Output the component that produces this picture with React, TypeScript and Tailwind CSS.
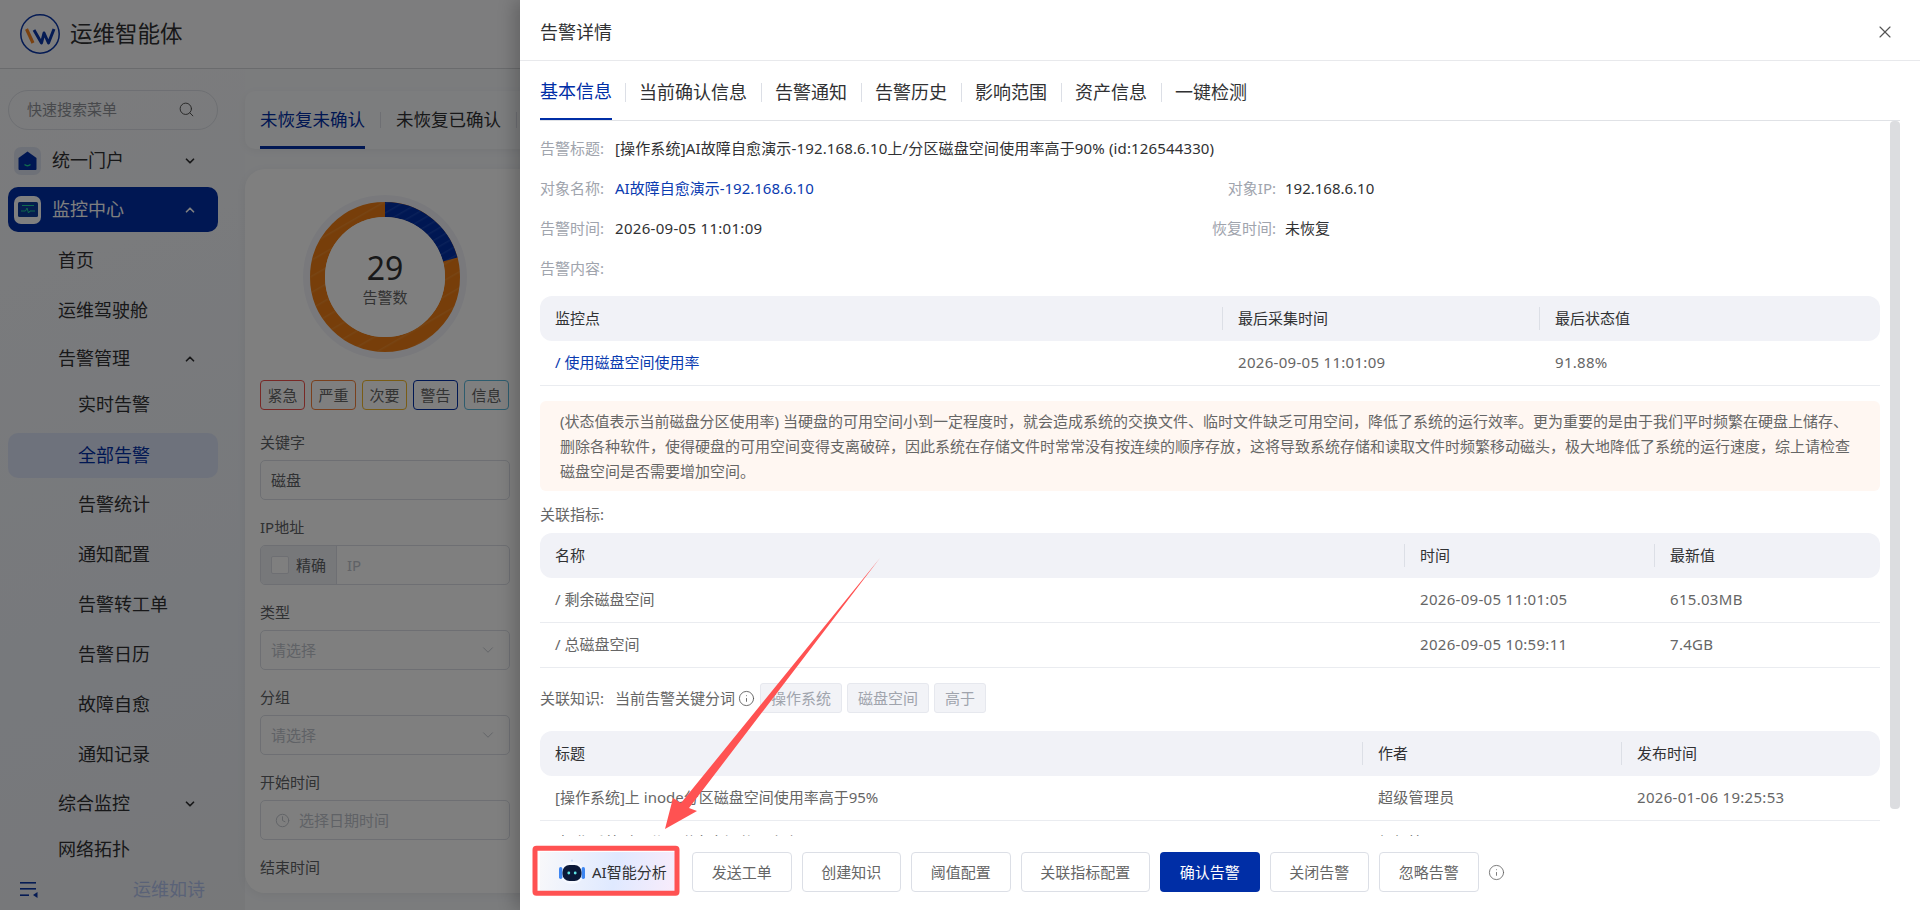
import { ChevronDown, ChevronUp, Clock, Info, Search, X } from "lucide-react";
import type { ReactNode } from "react";

type Row = string[];

const subMenu = ["实时告警", "全部告警", "告警统计", "通知配置", "告警转工单", "告警日历", "故障自愈", "通知记录"];
const panelTabs = ["当前确认信息", "告警通知", "告警历史", "影响范围", "资产信息", "一键检测"];
const footerButtons = ["发送工单", "创建知识", "阈值配置", "关联指标配置"];
const levelTags = [
  { label: "紧急", cls: "border-[#f0524d]" },
  { label: "严重", cls: "border-[#f5803a]" },
  { label: "次要", cls: "border-[#f2b92b]" },
  { label: "警告", cls: "border-[#002ea6]" },
  { label: "信息", cls: "border-[#5bb8dc]" },
];

function Logo() {
  return (
    <svg width="40" height="40" viewBox="0 0 40 40" fill="none">
      <circle cx="20" cy="20" r="19.2" stroke="#0a36a8" strokeWidth="1.5" />
      <path d="M6.5 15 L13 29" stroke="#f58220" strokeWidth="3.2" />
      <path d="M14 16 L21.5 29 L24 19 L28.5 29 L34 15" stroke="#0a36a8" strokeWidth="3" strokeLinejoin="round" />
    </svg>
  );
}

function PortalIcon() {
  return (
    <div className="grid h-[28px] w-[27px] place-items-center rounded-[7px] bg-[#dde2f0]">
      <svg width="19" height="19" viewBox="0 0 19 19">
        <path d="M9.5 0.5 L18.5 7 V18 Q18.5 19 17.5 19 H1.5 Q0.5 19 0.5 18 V7 Z" fill="#002ea6" />
        <path d="M6.5 13.5 Q9.5 16 12.5 13.5" stroke="#1fd49a" strokeWidth="1.5" fill="none" />
      </svg>
    </div>
  );
}

function MonitorIcon() {
  return (
    <div className="grid h-[28px] w-[27px] place-items-center rounded-[7px] bg-white">
      <svg width="20" height="15" viewBox="0 0 20 15">
        <rect width="20" height="15" rx="1.5" fill="#0a3a9c" />
        <path d="M4 3.5 H16" stroke="#1fd49a" strokeWidth="1" />
        <path d="M3 9 H7.5 L9 6 L10.5 11 L12 9 H17" stroke="#1fd49a" strokeWidth="1" fill="none" />
      </svg>
    </div>
  );
}

function CollapseIcon() {
  return (
    <svg width="18" height="16" viewBox="0 0 18 16" fill="#0a36a8">
      <rect x="0" y="0" width="16" height="1.6" />
      <rect x="0" y="6" width="16" height="1.6" />
      <rect x="0" y="12.4" width="9" height="1.6" />
      <path d="M17.5 10 V16 L13 13 Z" />
    </svg>
  );
}

function RobotIcon() {
  return (
    <svg width="26" height="28" viewBox="0 0 26 28">
      <circle cx="13" cy="2.5" r="0.9" fill="#c9d8f5" />
      <path d="M13 3 V7" stroke="#d9e4f7" strokeWidth="1" />
      <ellipse cx="13" cy="15" rx="12" ry="11" fill="#f5f8ff" />
      <rect x="0" y="9" width="3.4" height="12" rx="1.7" fill="#3d86f2" />
      <rect x="22.6" y="9" width="3.4" height="12" rx="1.7" fill="#3d86f2" />
      <rect x="3.5" y="7" width="19" height="16" rx="7" fill="#0b1838" />
      <circle cx="9.8" cy="15" r="1.4" fill="#5fe6e6" />
      <circle cx="16.2" cy="15" r="1.4" fill="#5fe6e6" />
    </svg>
  );
}

function Sidebar() {
  return (
    <aside className="flex w-[245px] shrink-0 flex-col bg-[linear-gradient(160deg,#f7f8fa,#eef2f9_70%,#eef0f3)]">
      <div className="mt-[21px] ml-[8px] flex h-[40px] w-[210px] items-center justify-between rounded-full border border-[#dcdfe6] pr-[22px] pb-[2px] pl-[18px] text-[15px] text-[#909399]">
        <span>快速搜索菜单</span>
        <Search size={17} strokeWidth={1.4} className="text-[#555]" />
      </div>

      <div className="mt-[8px] ml-[8px] flex h-[45px] w-[210px] items-center gap-[11px] pr-[21px] pl-[6px] text-[18px] text-[#303133]">
        <PortalIcon />
        <span className="flex-1">统一门户</span>
        <ChevronDown size={14} strokeWidth={3} />
      </div>
      <div className="mt-[4px] ml-[8px] flex h-[45px] w-[210px] items-center gap-[11px] rounded-[10px] bg-[#002ea6] pr-[21px] pl-[6px] text-[18px] text-white">
        <MonitorIcon />
        <span className="flex-1">监控中心</span>
        <ChevronUp size={14} strokeWidth={3} />
      </div>

      <div className="mt-[4px] flex h-[50px] items-center pb-[2px] pl-[58px] text-[18px] text-[#303133]">首页</div>
      <div className="flex h-[50px] items-center pb-[2px] pl-[58px] text-[18px] text-[#303133]">运维驾驶舱</div>
      <div className="flex h-[44px] items-center justify-between pt-[1px] pr-[48px] pl-[58px] text-[18px] text-[#303133]">
        告警管理
        <ChevronUp size={14} strokeWidth={3} />
      </div>
      {subMenu.map((item) =>
        item === "全部告警" ? (
          <div key={item} className="flex h-[50px] items-center">
            <div className="ml-[8px] flex h-[45px] w-[210px] items-center rounded-[10px] bg-[#dde5f8] pl-[70px] text-[18px] text-[#002ea6]">{item}</div>
          </div>
        ) : (
          <div key={item} className="flex h-[50px] items-center pb-[1px] pl-[78px] text-[18px] text-[#303133]">
            {item}
          </div>
        ),
      )}
      <div className="flex h-[50px] items-center justify-between pr-[48px] pb-[3px] pl-[58px] text-[18px] text-[#303133]">
        综合监控
        <ChevronDown size={14} strokeWidth={3} />
      </div>
      <div className="flex h-[40px] items-center pb-[2px] pl-[58px] text-[18px] text-[#303133]">网络拓扑</div>
      <div className="flex h-[40px] items-center justify-between pr-[40px] pb-[1px] pl-[20px]">
        <CollapseIcon />
        <span className="text-[18px] text-[#b4c4ee]">运维如诗</span>
      </div>
    </aside>
  );
}

function Field({ label, first, children }: { label: string; first?: boolean; children: ReactNode }) {
  return (
    <div className={first ? "mt-[23px]" : "mt-[18px]"}>
      <div className="h-[20px] text-[15px] leading-[18px] text-[#606266]">{label}</div>
      {children}
    </div>
  );
}

function SelectBox() {
  return (
    <div className="mt-[7px] flex h-[40px] items-center justify-between rounded-[5px] border border-[#dcdfe6] pr-[12px] pl-[10px] text-[15px] text-[#c0c4cc]">
      请选择
      <ChevronDown size={18} strokeWidth={1.2} />
    </div>
  );
}

function Main() {
  return (
    <main className="min-w-0 flex-1">
      <div className="mt-[22px] flex h-[58px] items-end rounded-[10px] bg-[#f9fafc] pl-[15px] text-[17.5px] shadow-[0_2px_8px_rgba(0,0,0,0.05)]">
        <div className="flex h-[59px] w-[105px] items-center justify-center border-b-[3px] border-[#002ea6] pt-[2px] whitespace-nowrap text-[#002ea6]">未恢复未确认</div>
        <div className="mx-[15px] mb-[21px] h-[16px] w-px bg-[#dcdfe6]" />
        <div className="flex h-[59px] w-[105px] items-center justify-center pt-[2px] pb-[3px] whitespace-nowrap text-[#303133]">未恢复已确认</div>
        <div className="mx-[15px] mb-[21px] h-[16px] w-px bg-[#dcdfe6]" />
      </div>
      <div className="mt-[20px] h-[724px] rounded-[20px] bg-white pt-[23px] pl-[15px] shadow-[0_2px_10px_rgba(0,0,0,0.06)]">
        <div className="w-[250px]">
          <div className="relative h-[170px] w-[250px]">
            <svg width="250" height="170" viewBox="0 0 250 170">
              <defs>
                <pattern id="hatch" width="14" height="14" patternUnits="userSpaceOnUse" patternTransform="rotate(-30)">
                  <rect width="14" height="14" fill="#ee7d14" />
                  <rect width="14" height="1.5" fill="#f08a2a" />
                </pattern>
                <pattern id="hatchBlue" width="8" height="8" patternUnits="userSpaceOnUse" patternTransform="rotate(-30)">
                  <rect width="8" height="8" fill="#002ea6" />
                  <rect width="8" height="1.5" fill="#1442b4" />
                </pattern>
              </defs>
              <circle cx="125" cy="85" r="82" fill="#f2f3f9" />
              <circle cx="125" cy="85" r="67.5" fill="none" stroke="url(#hatch)" strokeWidth="15" />
              <path d="M125 17.5 A67.5 67.5 0 0 1 190.2 67.5" fill="none" stroke="url(#hatchBlue)" strokeWidth="15" />
              <circle cx="125" cy="85" r="60" fill="white" />
            </svg>
            <div className="absolute inset-x-0 top-[54px] text-center text-[32px] leading-[44px] text-[#303133]">29</div>
            <div className="absolute inset-x-0 top-[94px] text-center text-[15px] leading-[22px] text-[#666]">告警数</div>
          </div>
          <div className="mt-[18px] flex gap-[6px]">
            {levelTags.map((tag) => (
              <div key={tag.label} className={`flex h-[30px] w-[45px] items-center justify-center rounded-[4px] border text-[15px] text-[#666] ${tag.cls}`}>
                {tag.label}
              </div>
            ))}
          </div>
          <Field label="关键字" first>
            <div className="mt-[7px] flex h-[40px] items-center rounded-[5px] border border-[#dcdfe6] pl-[10px] text-[15px] text-[#606266]">磁盘</div>
          </Field>
          <Field label="IP地址">
            <div className="mt-[7px] flex h-[40px] items-stretch overflow-hidden rounded-[5px] border border-[#dcdfe6] text-[15px]">
              <div className="flex w-[76px] items-center gap-[7px] border-r border-[#dcdfe6] bg-[#eef0f5] pl-[10px] text-[#606266]">
                <span className="h-[18px] w-[18px] rounded-[2px] border border-[#dcdfe6] bg-white" />
                精确
              </div>
              <div className="flex items-center pl-[10px] text-[#c0c4cc]">IP</div>
            </div>
          </Field>
          <Field label="类型">
            <SelectBox />
          </Field>
          <Field label="分组">
            <SelectBox />
          </Field>
          <Field label="开始时间">
            <div className="mt-[7px] flex h-[40px] items-center gap-[9px] rounded-[5px] border border-[#dcdfe6] pl-[14px] text-[15px] text-[#c0c4cc]">
              <Clock size={15} strokeWidth={1.5} />
              选择日期时间
            </div>
          </Field>
          <Field label="结束时间">
            <div />
          </Field>
        </div>
      </div>
    </main>
  );
}

function DataTable({ cols, head, rows, linkFirst }: { cols: string; head: string[]; rows: Row[]; linkFirst?: boolean }) {
  return (
    <div className="text-[15px]">
      <div className={`grid h-[45px] items-center rounded-[12px] bg-[#f1f2f7] text-[#303133] ${cols}`}>
        {head.map((cell, i) => (
          <div key={cell} className={i === 0 ? "pb-[1px] pl-[15px]" : "flex h-[23px] items-center border-l border-[#dcdfe6] pb-[1px] pl-[15px]"}>
            {cell}
          </div>
        ))}
      </div>
      {rows.map((row) => (
        <div key={row[0]} className={`grid h-[45px] items-center border-b border-[#eaecf0] pb-[2px] text-[#666] ${cols}`}>
          {row.map((cell, i) => (
            <div key={i} className={i === 0 ? `pl-[15px] ${linkFirst ? "text-[#0a3bb0]" : ""}` : "pl-[16px] tracking-[0.3px]"}>
              {cell}
            </div>
          ))}
        </div>
      ))}
    </div>
  );
}

function InfoRow({ label, value, valueCls }: { label: string; value: string; valueCls?: string }) {
  return (
    <div className="flex h-[40px] items-center text-[15px]">
      <span className="w-[75px] shrink-0 text-[#a0a4ad]">{label}</span>
      <span className={valueCls ?? "text-[#303133]"}>{value}</span>
    </div>
  );
}

function AlarmPanel() {
  return (
    <section className="absolute top-0 right-0 z-20 flex h-full w-[1400px] flex-col bg-white shadow-[-6px_0_16px_rgba(0,0,0,0.2)]">
      <header className="flex h-[61px] shrink-0 items-center justify-between border-b border-[#e8e9ec] pt-[5px] pr-[25px] pl-[20px] text-[18px] text-[#303133]">
        告警详情
        <X size={20} strokeWidth={1.4} className="-mt-[2px] text-[#555]" />
      </header>

      <div className="mx-[20px] flex h-[60px] shrink-0 items-stretch border-b border-[#e0e2e6] text-[18px] text-[#303133]">
        <div className="-mr-[1px] flex items-center border-b-[2px] border-[#002ea6] pt-[3px] text-[#002ea6]">基本信息</div>
        {panelTabs.map((tab) => (
          <div key={tab} className="flex items-center pt-[3px]">
            <span className="mx-[13.5px] h-[19px] w-px bg-[#dcdfe6]" />
            {tab}
          </div>
        ))}
      </div>

      <div className="relative min-h-0 flex-1 overflow-hidden pt-[7px] pr-[40px] pl-[20px]">
        <InfoRow label="告警标题:" value="[操作系统]AI故障自愈演示-192.168.6.10上/分区磁盘空间使用率高于90% (id:126544330)" valueCls="text-[#303133] tracking-[0.14px]" />
        <div className="grid grid-cols-[661px_1fr]">
          <InfoRow label="对象名称:" value="AI故障自愈演示-192.168.6.10" valueCls="text-[#0a3bb0]" />
          <div className="flex h-[40px] items-center text-[15px]">
            <span className="w-[75px] shrink-0 text-right text-[#a0a4ad]">对象IP:</span>
            <span className="ml-[9px] text-[#303133]">192.168.6.10</span>
          </div>
          <InfoRow label="告警时间:" value="2026-09-05 11:01:09" valueCls="text-[#303133] tracking-[0.3px]" />
          <div className="flex h-[40px] items-center text-[15px]">
            <span className="w-[75px] shrink-0 text-right text-[#a0a4ad]">恢复时间:</span>
            <span className="ml-[9px] text-[#303133]">未恢复</span>
          </div>
        </div>
        <InfoRow label="告警内容:" value="" />

        <div className="mt-[8px]">
          <DataTable
            cols="grid-cols-[682px_317px_1fr]"
            head={["监控点", "最后采集时间", "最后状态值"]}
            rows={[["/ 使用磁盘空间使用率", "2026-09-05 11:01:09", "91.88%"]]}
            linkFirst
          />
        </div>

        <p className="mt-[15px] h-[90px] rounded-[6px] bg-[#fff7f2] py-[8px] pl-[20px] text-[15px] leading-[25px] whitespace-nowrap text-[#666]">
          (状态值表示当前磁盘分区使用率) 当硬盘的可用空间小到一定程度时，就会造成系统的交换文件、临时文件缺乏可用空间，降低了系统的运行效率。更为重要的是由于我们平时频繁在硬盘上储存、
          <br />
          删除各种软件，使得硬盘的可用空间变得支离破碎，因此系统在存储文件时常常没有按连续的顺序存放，这将导致系统存储和读取文件时频繁移动磁头，极大地降低了系统的运行速度，综上请检查
          <br />
          磁盘空间是否需要增加空间。
        </p>

        <div className="mt-[14px] mb-[8px] h-[20px] text-[15px] leading-[18px] text-[#666]">关联指标:</div>
        <DataTable
          cols="grid-cols-[864px_250px_1fr]"
          head={["名称", "时间", "最新值"]}
          rows={[
            ["/ 剩余磁盘空间", "2026-09-05 11:01:05", "615.03MB"],
            ["/ 总磁盘空间", "2026-09-05 10:59:11", "7.4GB"],
          ]}
        />

        <div className="mt-[15px] mb-[18px] flex h-[30px] items-center text-[15px] text-[#666]">
          <span className="w-[75px] shrink-0">关联知识:</span>
          <span>当前告警关键分词</span>
          <Info size={17} strokeWidth={1.2} className="mr-[5px] ml-[3px] text-[#555]" />
          {["操作系统", "磁盘空间", "高于"].map((word) => (
            <span key={word} className="mr-[5px] flex h-[30px] items-center rounded-[3px] border border-[#e6e8ee] bg-[#f2f3f7] px-[10px] text-[#a0a4ad]">
              {word}
            </span>
          ))}
        </div>

        <DataTable
          cols="grid-cols-[822px_259px_1fr]"
          head={["标题", "作者", "发布时间"]}
          rows={[
            ["[操作系统]上 inode分区磁盘空间使用率高于95%", "超级管理员", "2026-01-06 19:25:53"],
            ["[操作系统]上 /分区磁盘空间使用率高于90%", "超级管理员", "2026-01-06 19:25:50"],
          ]}
        />

        <div className="absolute top-0 right-[20px] h-[688px] w-[10px] rounded-[4px] bg-[#dcdde0]" />
      </div>

      <footer className="flex h-[74px] shrink-0 items-start gap-[10px] pt-[16px] pl-[20px] text-[15px]">
        <button className="mr-[6px] flex h-[40px] w-[136px] items-center gap-[7px] bg-[linear-gradient(100deg,#f8f8fa,#dfe9ff_55%,#f9ecfb)] pl-[19px] whitespace-nowrap text-[#303133]">
          <RobotIcon />
          AI智能分析
        </button>
        {footerButtons.map((label) => (
          <button key={label} className="h-[40px] rounded-[4px] border border-[#dcdfe6] bg-white px-[18.75px] text-[#666]">
            {label}
          </button>
        ))}
        <button className="h-[40px] rounded-[4px] bg-[#002ea6] px-[19.75px] text-white">确认告警</button>
        <button className="h-[40px] rounded-[4px] border border-[#dcdfe6] bg-white px-[18.75px] text-[#666]">关闭告警</button>
        <button className="h-[40px] rounded-[4px] border border-[#dcdfe6] bg-white px-[18.75px] text-[#666]">忽略告警</button>
        <Info size={17} strokeWidth={1.2} className="mt-[12px] -ml-[1px] text-[#666]" />
      </footer>
    </section>
  );
}

// red annotation drawn on top of the screenshot
function Annotation() {
  return (
    <svg className="pointer-events-none absolute inset-0 z-30" width="1920" height="910" viewBox="0 0 1920 910">
      <polygon points="880,558 689,808 697,811 665,829 673,798 681,803" fill="#ff5252" />
      <rect x="535" y="848.3" width="142" height="45" rx="1.5" fill="none" stroke="#ff5252" strokeWidth="5" />
    </svg>
  );
}

export default function App() {
  return (
    <div className="relative flex h-[910px] w-[1920px] flex-col overflow-hidden bg-[#f6f8fb] font-['Noto_Sans','Noto_Sans_CJK_SC',sans-serif]">
      <div className="flex h-[69px] shrink-0 items-center gap-[10px] border-b border-[#d4d6da] bg-[#fbfbfc] pl-[20px]">
        <Logo />
        <span className="text-[22.5px] text-[#303133]">运维智能体</span>
      </div>
      <div className="flex min-h-0 flex-1">
        <Sidebar />
        <Main />
      </div>
      <div className="absolute inset-0 z-10 bg-black/50" />
      <AlarmPanel />
      <Annotation />
    </div>
  );
}
